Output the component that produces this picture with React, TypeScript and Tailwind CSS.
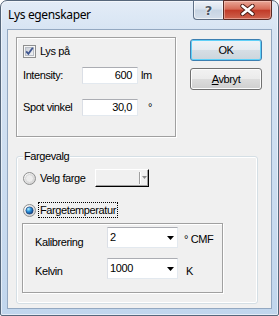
import React from "react";

function Checkbox() {
  return (
    <svg width="13" height="13" viewBox="0 0 13 13" className="shrink-0">
      <defs>
        <linearGradient id="cbg" x1="0" y1="0" x2="1" y2="1">
          <stop offset="0" stopColor="#c9ced6" />
          <stop offset="1" stopColor="#f4f5f7" />
        </linearGradient>
      </defs>
      <rect x="0.5" y="0.5" width="12" height="12" fill="#f6f6f6" stroke="#8e8f8f" />
      <rect x="2.5" y="2.5" width="8" height="8" fill="url(#cbg)" stroke="#b9bec6" />
      <path d="M3.2 6.3 L5.4 8.9 L9.8 2.8" fill="none" stroke="#3f5690" strokeWidth="1.8" />
    </svg>
  );
}

function Radio({ checked }: { checked?: boolean }) {
  return (
    <svg width="13" height="13" viewBox="0 0 13 13" className="shrink-0">
      <defs>
        <radialGradient id="rbg" cx="0.3" cy="0.3" r="0.8">
          <stop offset="0" stopColor="#ffffff" />
          <stop offset="1" stopColor="#d0d0d0" />
        </radialGradient>
        <radialGradient id="rdot" cx="0.35" cy="0.3" r="0.75">
          <stop offset="0" stopColor="#b4f1ff" />
          <stop offset="0.45" stopColor="#2f97dc" />
          <stop offset="1" stopColor="#0b3a80" />
        </radialGradient>
      </defs>
      <circle cx="6.5" cy="6.5" r="6" fill="url(#rbg)" stroke="#8e8f8f" />
      {checked ? (
        <circle cx="6.5" cy="6.5" r="3.6" fill="url(#rdot)" stroke="#183f7d" strokeWidth="0.7" />
      ) : (
        <circle cx="6.5" cy="6.5" r="4" fill="#ececec" stroke="#d6d6d6" />
      )}
    </svg>
  );
}

function TextBox({ value }: { value: string }) {
  return (
    <div className="w-[56px] h-[17px] bg-white border border-[#dbdfe6] border-t-[#abadb3] border-r-[#e3e9ef] border-b-[#e3e9ef] flex items-center justify-end pr-[5px] leading-[13px]">
      {value}
    </div>
  );
}

function Combo({ value }: { value: string }) {
  return (
    <div className="w-[71px] h-[21px] bg-white border border-[#dbdfe6] border-t-[#abadb3] border-r-[#e3e9ef] border-b-[#e3e9ef] flex items-center pl-[2px] pr-[3px] leading-[13px]">
      <span className="flex-1">{value}</span>
      <svg width="7" height="4" viewBox="0 0 7 4">
        <path d="M0 0 H7 L3.5 4 Z" fill="#000" />
      </svg>
    </div>
  );
}

function Button({ children, isDefault }: { children: React.ReactNode; isDefault?: boolean }) {
  return (
    <div
      className={
        "w-[72px] h-[22px] rounded-[3px] border flex items-center justify-center leading-[13px] " +
        (isDefault
          ? "border-[#3c7fb1] bg-[linear-gradient(#eef3f7_0%,#e5ebf0_50%,#d6dee5_50%,#ccd5dc_100%)] shadow-[inset_0_0_0_1px_#5fd0f8]"
          : "border-[#707070] bg-[linear-gradient(#f2f2f2_0%,#ebebeb_50%,#dddddd_50%,#cfcfcf_100%)] shadow-[inset_0_0_0_1px_#fcfcfc]")
      }
    >
      {children}
    </div>
  );
}

export default function App() {
  return (
    <div className="w-[279px] h-[316px] overflow-hidden bg-white font-['Liberation_Sans',Arial,sans-serif] text-[11px] tracking-[-0.4px] text-black">
      <div className="relative flex flex-col w-[279px] h-[316px] rounded-t-[7px] rounded-b-[2px] border border-[#56677b] bg-[linear-gradient(#e3ecf7_0px,#d7e4f3_30px,#c1d6ed_100%)] shadow-[inset_0_0_0_1px_rgba(255,255,255,0.55)]">
        {/* title bar */}
        <div className="h-[28px] flex items-center pl-[7px] pb-[1px] font-['Noto_Sans',sans-serif] text-[12px] tracking-[-0.35px] text-black">
          Lys egenskaper
        </div>

        {/* caption buttons */}
        <div className="absolute top-[-1px] right-[6px] flex h-[20px]">
          <div className="w-[30px] h-[20px] rounded-bl-[4px] border border-r-0 border-[#5f7086] bg-[linear-gradient(#eef2f8_0%,#d9e2ed_45%,#c7d4e3_50%,#d4deea_100%)] shadow-[inset_0_0_0_1px_rgba(255,255,255,0.6)] flex items-center justify-center font-['DejaVu_Sans',sans-serif] font-bold text-[13px] leading-none tracking-normal text-[#4b5563] [text-shadow:0_0_2px_#fff,0_0_1px_#fff]">
            ?
          </div>
          <div className="w-[49px] h-[20px] rounded-br-[4px] border border-[#5a2a24] bg-[linear-gradient(#e9a797_0%,#d66b57_45%,#c13b28_52%,#cf644f_100%)] shadow-[inset_0_0_0_1px_rgba(255,220,210,0.45)] flex items-center justify-center">
            <svg width="15" height="12" viewBox="0 0 15 12">
              <path d="M2.5 2 L12.5 10 M12.5 2 L2.5 10" stroke="#4a1a12" strokeWidth="4.4" strokeLinecap="round" />
              <path d="M2.5 2 L12.5 10 M12.5 2 L2.5 10" stroke="#ffffff" strokeWidth="2.6" strokeLinecap="round" />
            </svg>
          </div>
        </div>

        {/* client area */}
        <div className="mx-[6px] flex-1 border border-[#93a8c1] bg-[#f0f0f0] flex flex-col">
          {/* top section */}
          <div className="flex items-start">
            {/* etched group 1 */}
            <div className="ml-[8px] mt-[7px] w-[160px] h-[100px] border border-[#a0a0a0] shadow-[inset_1px_1px_0_#fff,1px_1px_0_#fff] flex flex-col pl-[6px]">
              <div className="mt-[7px] h-[13px] flex items-center gap-[4px] leading-[13px]">
                <Checkbox />
                <span>Lys på</span>
              </div>
              <div className="mt-[9px] h-[17px] flex items-center leading-[13px]">
                <span className="w-[59px]">Intensity:</span>
                <TextBox value="600" />
                <span className="ml-[3px]">lm</span>
              </div>
              <div className="mt-[15px] h-[17px] flex items-center leading-[13px]">
                <span className="w-[59px]">Spot vinkel</span>
                <TextBox value="30,0" />
                <span className="ml-[10px]">°</span>
              </div>
            </div>

            {/* buttons */}
            <div className="ml-[14px] mt-[9px] flex flex-col gap-[7px]">
              <Button isDefault>OK</Button>
              <Button>
                <span>
                  <span className="underline">A</span>vbryt
                </span>
              </Button>
            </div>
          </div>

          {/* Fargevalg group */}
          <div className="relative ml-[8px] mt-[19px] w-[242px] h-[148px] rounded-[3px] border border-[#d5dfe5] shadow-[inset_0_0_0_1px_#fff] flex flex-col">
            <span className="absolute left-[6px] -top-[7px] px-[1px] bg-[#f0f0f0] leading-[13px]">Fargevalg</span>

            <div className="mt-[12px] ml-[6px] h-[18px] flex items-center leading-[13px]">
              <Radio />
              <span className="ml-[4px] w-[55px]">Velg farge</span>
              <div className="w-[54px] h-[18px] flex border border-white border-r-black border-b-black shadow-[inset_-1px_-1px_0_#a0a0a0] bg-[#f0f0f0]">
                <div className="flex-1" />
                <div className="w-[1px] my-[2px] bg-[#a0a0a0] shadow-[1px_0_0_#fff]" />
                <div className="w-[8px] flex items-center justify-center pb-[1px]">
                  <svg width="5" height="3" viewBox="0 0 5 3">
                    <path d="M0 0 H5 L2.5 3 Z" fill="#8a8a8a" />
                  </svg>
                </div>
              </div>
            </div>

            <div className="mt-[14px] ml-[6px] h-[18px] flex items-center leading-[13px]">
              <Radio checked />
              <span className="ml-[2px] px-[1px] h-[16px] flex items-center border border-dotted border-black">
                Fargetemperatur
              </span>
            </div>

            {/* inner etched box */}
            <div className="ml-[5px] mt-[4px] w-[201px] h-[70px] border border-[#a0a0a0] shadow-[inset_1px_1px_0_#fff,1px_1px_0_#fff] flex flex-col">
              <div className="mt-[3px] flex items-start leading-[13px]">
                <span className="ml-[12px] mt-[9px] w-[72px]">Kalibrering</span>
                <Combo value="2" />
                <span className="ml-[6px] mt-[6px]">° CMF</span>
              </div>
              <div className="mt-[9px] flex items-start leading-[13px]">
                <span className="ml-[12px] mt-[7px] w-[72px]">Kelvin</span>
                <Combo value="1000" />
                <span className="ml-[8px] mt-[7px]">K</span>
              </div>
            </div>
          </div>
        </div>
        <div className="h-[6px]" />
      </div>
    </div>
  );
}
